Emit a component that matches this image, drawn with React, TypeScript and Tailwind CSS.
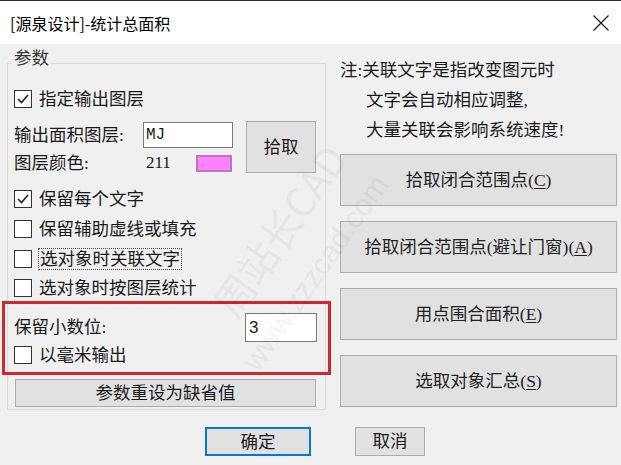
import React from 'react';

const cjk = "font-['Liberation_Serif','Noto_Sans_CJK_SC',serif]";

const Check = ({ checked }: { checked?: boolean }) => (
  <span className="w-[18px] h-[18px] border border-[#333] bg-white flex items-center justify-center shrink-0">
    {checked && (
      <svg width="14" height="14" viewBox="0 0 14 14">
        <polyline points="2,7 5.5,10.5 12,3" fill="none" stroke="#222" strokeWidth="1.6" />
      </svg>
    )}
  </span>
);

const CheckRow = ({ label, checked, focus, h = 'h-[30px]' }: { label: string; checked?: boolean; focus?: boolean; h?: string }) => (
  <div className={`flex items-center gap-[6px] ${h}`}>
    <Check checked={checked} />
    <span className={focus ? 'border border-dotted border-[#444] leading-[20px] px-[1px]' : 'leading-[20px] px-[1px]'}>{label}</span>
  </div>
);

const SideButton = ({ text, hot }: { text: string; hot: string }) => (
  <button className="h-[52px] w-full bg-[#e1e1e1] border border-[#adadad] flex items-center justify-center text-[17.5px] text-[#222]">
    {text}(<span className="underline underline-offset-2">{hot}</span>)
  </button>
);

export default function App() {
  return (
    <div className={`relative w-[621px] h-[465px] bg-[#f0f0f0] flex flex-col overflow-hidden text-[#1a1a1a] ${cjk}`}>
      {/* title bar */}
      <div className="h-[44px] bg-white border-t border-[#2b2b2b] flex items-center justify-between pl-[10px] pr-[12px] shrink-0">
        <span className="text-[16px] font-['Noto_Sans_CJK_SC',sans-serif] text-black">[源泉设计]-统计总面积</span>
        <svg width="16" height="16" viewBox="0 0 16 16">
          <path d="M0.5 0.5 L15.5 15.5 M15.5 0.5 L0.5 15.5" stroke="#111" strokeWidth="1.1" />
        </svg>
      </div>

      <div className="flex pl-[7px] gap-[14px] text-[17.5px]">
        {/* group box */}
        <fieldset className="mt-[4px] w-[319px] border border-[#dcdcdc] pl-[6px] pr-[8px] pb-[2px]">
          <legend className="-ml-[2px] px-[2px] leading-[20px] pb-[10px] text-[#333]">参数</legend>
          <div className="flex flex-col pt-[6px]">
            <CheckRow label="指定输出图层" checked />
            <div className="flex mt-[7px] h-[56px]">
              <div className="flex flex-col">
                <div className="flex items-center h-[28px]">
                  <span className="w-[129px]">输出面积图层:</span>
                  <span className="w-[90px] h-[26px] bg-white border border-[#7a7a7a] flex items-center pl-[2px] font-['Liberation_Mono',monospace] text-[16px]">MJ</span>
                </div>
                <div className="flex items-center h-[28px]">
                  <span className="w-[132px]">图层颜色:</span>
                  <span className="w-[50px] text-[17px]">211</span>
                  <span className="w-[36px] h-[17px] bg-[#ff80ff] border-2 border-[#b67ab6]" />
                </div>
              </div>
              <button className="ml-[13px] w-[70px] h-[52px] bg-[#e1e1e1] border border-[#adadad] text-[17.5px]">拾取</button>
            </div>
            <div className="mt-[7px]">
              <CheckRow label="保留每个文字" checked />
              <CheckRow label="保留辅助虚线或填充" />
              <CheckRow label="选对象时关联文字" focus />
              <CheckRow label="选对象时按图层统计" h="h-[27px]" />
            </div>
            <div className="-ml-[12px] -mr-[14px] border-[3px] border-[#d0262d] pl-[9px] pr-[11px] pt-[8px] pb-[5px]">
              <div className="flex items-center justify-between h-[31px]">
                <span>保留小数位:</span>
                <span className="w-[72px] h-[29px] bg-white border border-[#7a7a7a] flex items-center pl-[3px] font-['Liberation_Sans',sans-serif] text-[17px]">3</span>
              </div>
              <CheckRow label="以毫米输出" h="h-[24px]" />
            </div>
            <button className="mt-[4px] mx-[1px] h-[28px] bg-[#e1e1e1] border border-[#adadad] text-[17.5px]">参数重设为缺省值</button>
          </div>
        </fieldset>

        {/* right column */}
        <div className="w-[277px] pt-[11px] flex flex-col">
          <div className="leading-[30px]">
            <div>注:关联文字是指改变图元时</div>
            <div className="pl-[26px]">文字会自动相应调整,</div>
            <div className="pl-[26px]">大量关联会影响系统速度!</div>
          </div>
          <div className="mt-[9px] flex flex-col gap-[15px]">
            <SideButton text="拾取闭合范围点" hot="C" />
            <SideButton text="拾取闭合范围点(避让门窗)" hot="A" />
            <SideButton text="用点围合面积" hot="E" />
            <SideButton text="选取对象汇总" hot="S" />
          </div>
        </div>
      </div>

      {/* bottom buttons */}
      <div className="flex pl-[205px] gap-[44px] mt-[17px] text-[17.5px]">
        <button className="w-[106px] h-[29px] bg-[#e1e1e1] border-2 border-[#0078d7]">确定</button>
        <button className="w-[70px] h-[29px] bg-[#e1e1e1] border border-[#adadad]">取消</button>
      </div>

      {/* faint watermark over the dialog */}
      <div className="pointer-events-none absolute left-[180px] top-[200px] -rotate-[55deg] text-[40px] text-[#000] opacity-[0.04] font-['Noto_Sans_CJK_SC',sans-serif] whitespace-nowrap">
        周站长CAD
      </div>
      <div className="pointer-events-none absolute left-[200px] top-[250px] -rotate-[55deg] text-[30px] text-[#000] opacity-[0.04] font-['Liberation_Sans',sans-serif] whitespace-nowrap">
        www.zzzcad.com
      </div>
    </div>
  );
}
